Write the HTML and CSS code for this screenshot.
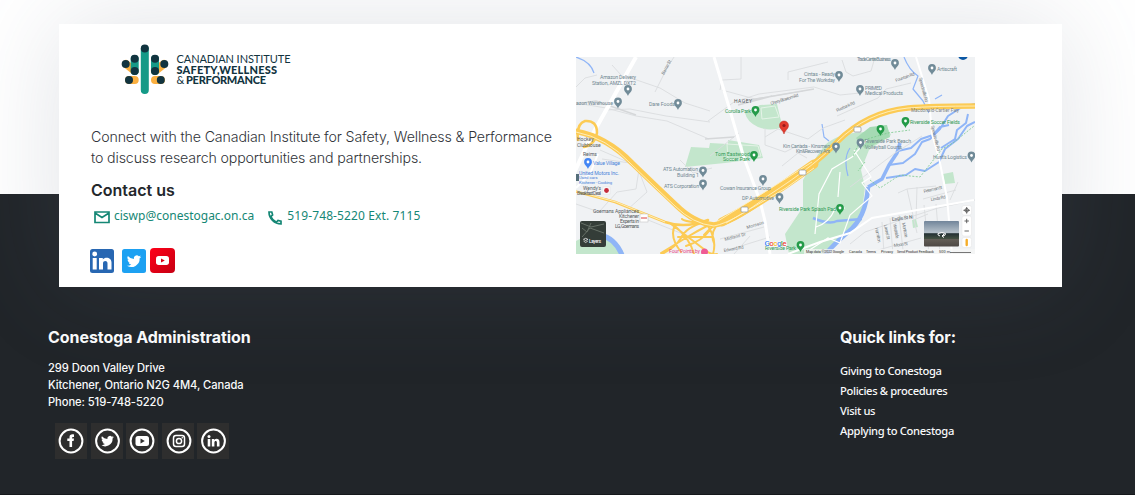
FILE: index.html
```html
<!DOCTYPE html>
<html lang="en">
<head>
<meta charset="utf-8">
<title>Canadian Institute for Safety, Wellness &amp; Performance</title>
<link rel="stylesheet" href="styles.css">
</head>
<body>
<div class="page">
  <main class="card">
    <section class="intro">
      <svg class="logo" viewBox="120 42 174 54" role="img" aria-label="Canadian Institute Safety, Wellness and Performance">
        <g stroke-width="8" stroke-linecap="round">
          <path stroke="#fbb040" d="M126 64l8.700 7M164 64l-9 7M129 80h5.700M161 80h-6"/>
          <path stroke="#159a87" d="M144.800 49v41M134.700 59v12M155 59v12"/>
        </g>
        <g fill="#12343f"><circle cx="144.800" cy="48.500" r="4"/><circle cx="134.700" cy="58.800" r="4"/><circle cx="155" cy="58.800" r="4"/><circle cx="125.700" cy="64" r="4"/><circle cx="164.300" cy="64" r="4"/><circle cx="134.700" cy="71" r="4"/><circle cx="155" cy="71" r="4"/><circle cx="129" cy="80" r="4"/><circle cx="160.800" cy="80" r="4"/></g>
        <g class="logo-text">
          <text x="176.500" y="62.700" textLength="114">CANADIAN INSTITUTE</text>
          <text class="heavy" x="176.500" y="73.500" textLength="100.500">SAFETY,WELLNESS</text>
          <text x="176.500" y="84.200">&amp;</text>
          <text class="heavy" x="186" y="84.200" textLength="80">PERFORMANCE</text>
        </g>
      </svg>
      <p class="lead">Connect with the Canadian Institute for Safety, Wellness &amp; Performance<br>to discuss research opportunities and partnerships.</p>
      <h2 class="contact-title">Contact us</h2>
      <div class="contacts">
        <svg class="mail-icon" viewBox="0 0 16 13"><path d="M1 1h14v10.500H1zM1 2l7 4.500L15 2"/></svg>
        <a class="email">ciswp@conestogac.on.ca</a>
        <svg class="phone-icon" viewBox="0 0 14 14"><path d="M1 1h2.800l.8 3-1.800 1.600a11 11 0 0 0 5.600 5.600L10 9.400l3 .8V13C6.500 13 1 7.500 1 1z"/></svg>
        <a class="phone">519-748-5220 Ext. 7115</a>
      </div>
      <div class="social">
        <svg class="tile linkedin" viewBox="0 0 24 24"><rect width="24" height="24" rx="2.500" fill="#2867b2"/><g fill="#fff"><circle cx="4.700" cy="5" r="2.400"/><path d="M2.700 9h4v11.500h-4zM9 9h3.800v1.600c2-3 8.700-2.700 8.700 3v6.900h-4v-6c0-3.200-4.500-3.200-4.500 0v6H9z"/></g></svg>
        <svg class="tile twitter" viewBox="0 0 24 24"><rect width="24" height="24" rx="2.500" fill="#1da1f2"/><use href="#bird" transform="translate(4.500 4.700) scale(.62)" fill="#fff"/></svg>
        <svg class="tile youtube" viewBox="0 0 25 25"><defs><linearGradient id="red" x2="1" y2="1"><stop stop-color="#ff0018"/><stop offset="1" stop-color="#c60013"/></linearGradient></defs><rect width="25" height="25" rx="4" fill="url(#red)"/><rect x="6" y="8" width="13" height="9" rx="2.700" fill="#fff"/><path fill="#d90016" d="M11 10.500v4l3.800-2z"/></svg>
      </div>
    </section>

    <svg class="map" viewBox="576 57 399 197">
      <defs>
        <path id="bird" d="M23.600 4.900c-.8.400-1.700.6-2.700.8a4.700 4.700 0 0 0 2-2.600 9 9 0 0 1-3 1.100 4.700 4.700 0 0 0-8 4.300A13.300 13.300 0 0 1 2.200 3.600a4.700 4.700 0 0 0 1.500 6.300c-.8 0-1.500-.2-2.100-.6a4.700 4.700 0 0 0 3.800 4.700c-.7.200-1.400.2-2.100.1a4.700 4.700 0 0 0 4.400 3.200A9.500 9.500 0 0 1 .7 19.300a13.300 13.300 0 0 0 20.500-11.800c.9-.7 1.700-1.500 2.400-2.600z"/>
        <g id="pin"><path d="M0 6C-1 3-3.900 2-3.900-1a3.900 3.900 0 0 1 7.800 0C3.900 2 1 3 0 6z"/><circle cy="-1" r="1.400" fill="#fff"/></g>
      </defs>
      <rect x="576" y="57" width="399" height="197" fill="#f0f2f4"/>
      <g fill="#c3e6cc">
        <path d="M745 113l15-8 17-1 3 13 3 10q-13 5-25 0-11-5-13-14z"/>
        <path d="M691 147l18 1 1-5 18 1v-4l31 5 4 13-38 5-40 4z"/>
        <path d="M869 128l17-3 5 10-22 15-8 20 4 17-4 34-29 26-7 7h-36l-4-20 18-27v-27l14-24 8-11q14-13 44-13z"/>
        <path d="M576 241q22-13 36 0 10 6 12 13h-48zM943 174l10-2 2 11-10 1zM912 220l4-1 2 8-5 1z"/>
      </g>
      <path fill="#a5dab3" d="M856 138l14-11 17-2 3 12-25 12z"/>
      <path fill="none" stroke="#e4f3e7" d="M761 108l14-2 4 11-17 2zM727 144l31 2 3 10-33 4zM742 145l2 13"/>
      <g fill="none" stroke="#8fb5f7" stroke-linejoin="round">
        <path stroke-width="5" d="M600 235q15 3 22 20"/>
        <path stroke-width="1.200" d="M576 57q15 5 18 16M904 57q5 13 14 19l-5 13 10 12 6 12M935 99l7-4M822 124l2 13 5 4M848 176q-5-18 2-28"/>
        <path stroke-width="4.500" d="M868 187q-2 31-20 45-15 13-23 23"/>
        <path stroke-width="3.600" d="M868 187l14-8 7-14 8-12 3-10"/>
        <path stroke-width="2" d="M889 165l14-2 12-9 7-12 8-3 10-10 8-13 14-9 13-3M975 122l-8 4-9 13-13 10-6 13-14 9-10-2-9 6-20 3M898 151l13-3 10-9 12-4 7-8 9-2M968 114l-2 9-9 7-2 9-14 9"/>
        <path stroke-width="2.500" d="M813 218q16 7 24 3l25-2"/>
      </g>
      <g fill="none" stroke="#dadddf" stroke-width=".9">
        <path d="M576 87l9-9 12-3M625 76l35 12 25 15 25 8M655 92l12-24 7-11M612 65l9 10M576 103l30 5 30 8 31 5 42 18M605 110l25-1 36 7 44 6M708 121l26-19 25-8 55-7 26 8 20-2M720 90l2-10 19-1V57M722 90l33 9 48-8M710 156l29-23M765 137l13-8 30 10 15-11 22-8M765 128v17l20 7 16-8M788 80v-8l40-10M842 60l4 12 7 4 18-5 4-14M837 116l20-9 21-9 8-9 25-6M576 204l23 8 18-20 19-3 3-20-9-6-28-4M600 150l37 16 10 26-20 18M643 218l40 16M680 160l13 13 19-5"/>
        <path d="M850 187l45-34 27-17M850 244l15-12 30-10 43-14 37-8M882 222l2 32M890 218l3 36M899 215l4 35M907 189l10 44M917 187l-1 32 12-5M898 193l9-4 29-3M923 199l33-9M950 200l8-18M924 205l5 49M936 204l4 50M871 252l50-14M720 239l44-12M728 250l42-13M734 254l16-18M782 166l16-13 9 5"/>
      </g>
      <g fill="none" stroke="#d5d7d9" stroke-width="1.500"><path d="M744 101l70-12M576 104l20-3 40 14M705 139l29-2M738 105l34-9"/></g>
      <g fill="none" stroke="#fff">
        <path stroke-width="4" d="M636 57l-45 80-17 36"/>
        <path stroke-width="3" d="M714 57l15 50 14 48 17 46 5 20 5 33"/>
        <path stroke-width="2" d="M916 57l13 42 3 35 7 24 8 40 5 56M788 254l32-12 30-9 22-15 102-18M576 188l14-14 8-20"/>
        <path stroke-width="1.200" d="M867 140l-15 17-20 12-13 25-4 40M854 150l17 27-9 6 10 13-22 19-10 28-12-5-20 13M816 227q13-4 19-18l10-1M840 172l-2 25"/>
      </g>
      <g fill="none" stroke="#fccb55" stroke-linecap="round">
        <path stroke-width="5.500" d="M574 131q32 5 58 32 27 26 44 42 18 18 38 20 20-3 55-30 48-31 68-53 30-30 71-34 25-2 70-2"/>
        <path stroke-width="2.500" d="M574 191l41 11 50 20q20 7 43-2M578 140q-2-16 7-19 12-1 12 12-2 12-13 14"/>
        <path stroke-width="2" d="M705 222q-19 5-24 16-5 9-19 16M705 223q-20-1-23-4M671 224l34 26q6 5 12 4M704 221q14 16 9 33M661 253l28-17q10-6 18-10M675 225q-6 12 6 27M710 230q-8 11-24 16M678 237h34M694 254q-4-15-18-27M704 235q9-10 17-13M726 216q-18 14-12 27"/>
        <path stroke-width="9" d="M722 222q26-13 62-37l30-21"/>
      </g>
      <g fill="none" stroke="#fff1c2" stroke-width=".9"><path d="M576 132q31 6 54 31 29 28 45 43 18 18 39 20 20-4 55-31 48-31 68-53 30-30 71-34 25-2 68-2M576 191l40 11 49 20M718 221l50-31 44-28M726 223l60-35 28-20"/></g>
      <g fill="none" stroke="#79c98c" stroke-width=".8" stroke-dasharray="2 1.500"><path d="M870 180l10 8 20-13 20 2 22-28 11-6 21-17M853 156l7-15 28-8 22-3M865 162l-7 9"/></g>
      <g fill="#fff" stroke="#8d9399" stroke-width=".7"><rect x="799" y="170" width="7" height="5" rx="1"/><rect x="741" y="207" width="7" height="5" rx="1"/><rect x="854" y="127" width="7" height="5" rx="1"/></g>
      <g fill="#718b98"><use href="#pin" x="628" y="90"/><use href="#pin" x="618" y="102.500"/><use href="#pin" x="678" y="104"/><use href="#pin" x="839" y="76"/><use href="#pin" x="895" y="64"/><use href="#pin" x="932" y="69"/><use href="#pin" x="860" y="90"/><use href="#pin" x="703" y="171.500"/><use href="#pin" x="703" y="184.500"/><use href="#pin" x="763" y="180"/><use href="#pin" x="779.500" y="198"/><use href="#pin" x="836" y="147.500"/><use href="#pin" x="860.500" y="143.500"/><use href="#pin" x="971.500" y="156.500"/></g>
      <g fill="#249b49"><use href="#pin" x="755.500" y="111"/><use href="#pin" x="880.500" y="130"/><use href="#pin" x="905.500" y="122"/><use href="#pin" x="754" y="156"/><use href="#pin" x="840" y="209"/><use href="#pin" x="800.500" y="246"/></g>
      <use href="#pin" x="588" y="163" fill="#4285f4"/>
      <path fill="#e33b2e" stroke="#b72a22" stroke-width=".5" d="M784 134c-1-4-4.500-5-4.500-8.500a4.500 4.500 0 0 1 9 0c0 3.500-3.500 4.500-4.500 8.500z"/><circle cx="784" cy="125.500" r="1.600" fill="#991b1b"/>
      <circle cx="704.500" cy="252" r="3.500" fill="#ef5b94"/><circle cx="963" cy="55" r="5" fill="#0b57a4"/>
      <g class="place">
        <text x="600" y="79" textLength="36">Amazon Delivery</text><text x="592" y="85" textLength="44">Station, AMZL DXT2</text><text x="576" y="104.500" textLength="37">azon Warehouse</text><text x="649" y="106" textLength="26">Dare Foods</text>
        <text x="804" y="76" textLength="31">Cintas - Ready</text><text x="799" y="81.500" textLength="36">For The Workday</text><text x="857" y="61" textLength="34">Trade Centre Business</text><text x="937" y="71" textLength="20">Artiscraft</text><text x="865" y="89.500" textLength="17">PRIMED</text><text x="865" y="94.800" textLength="38">Medical Products</text>
        <text x="663" y="171" textLength="35">ATS Automation</text><text x="677" y="176.500" textLength="22">Building 1</text><text x="664" y="187.500" textLength="35">ATS Corporation</text><text x="720" y="190" textLength="51">Cowan Insurance Group</text><text x="742" y="200" textLength="32">DP Automotive</text><text x="783" y="147.500" textLength="47">Kin Canada - Kinsmen</text><text x="796" y="153" textLength="34">Kin&amp;Recovery Ant</text><text x="865" y="143" textLength="46">Riverside Park Beach</text><text x="865" y="148.500" textLength="37">Volleyball Courts</text><text x="933" y="159" textLength="34">Hunt's Logistics</text>
      </g>
      <g class="place park"><text x="725" y="113" textLength="26">Corolla Park</text><text x="715" y="155.500" textLength="35">Tom Eastwood</text><text x="723" y="161" textLength="27">Soccer Park</text><text x="910" y="124" textLength="50">Riverside Soccer Fields</text><text x="779" y="211" textLength="57">Riverside Park Splash Pad</text><text x="765" y="250" textLength="31">Riverside Park</text></g>
      <g class="place dark"><text x="734" y="103" textLength="18">HAGEY</text><text x="577" y="141">Hockey</text><text x="577" y="146.500">Clubhouse</text><text x="583" y="155.500">Reims</text><text x="583" y="189.700" textLength="18">Wendy's</text><text x="577" y="195" textLength="24">Breakfast Deal</text><text x="593" y="213" textLength="46">Goemans Appliances</text><text x="619" y="218.200" textLength="20">Kitchener</text><text x="620" y="223" textLength="19">Experts in</text><text x="615" y="227.800" textLength="24">LG, Goemans</text><text x="892" y="221" transform="rotate(-7 892 221)" textLength="21">Eagle St N</text></g>
      <g class="place shop"><text x="593" y="164.500" textLength="27">Value Village</text><text x="579" y="175" textLength="40">United Motors Inc.</text><g class="tiny"><text x="579" y="179.300">Used cars</text><text x="579" y="183.500" textLength="33">Kitchener - Cooking</text></g></g>
      <text class="place hotel" x="669" y="253" textLength="31">Four Points by</text>
      <g class="place road"><text x="911" y="112" textLength="48">Macdonald-Cartier Fwy</text><text x="664" y="75" transform="rotate(-62 664 75)" textLength="16">Barrie St</text><text x="771" y="105" transform="rotate(-17 771 105)" textLength="29">Cherry Blossom Rd</text><text x="896" y="82" transform="rotate(-20 896 82)" textLength="20">Fountain Rd</text><text x="837" y="112" transform="rotate(-24 837 112)" textLength="20">Riverbank Rd</text><text x="919" y="78" transform="rotate(76 919 78)" textLength="25">Speedsville Rd</text><text x="931" y="126" transform="rotate(76 931 126)" textLength="26">Speedsville Rd</text><text x="725" y="241" transform="rotate(-15 725 241)">Midland Dr</text><text x="724" y="252" transform="rotate(-10 724 252)" textLength="20">Edward Rd</text><text x="747" y="229" transform="rotate(-17 747 229)" textLength="18">Morrison</text><text x="924" y="193" transform="rotate(-13 924 193)" textLength="19">Peterman St</text><text x="931" y="201" transform="rotate(-10 931 201)" textLength="15">Linda Rd</text><text x="894" y="247" transform="rotate(-8 894 247)" textLength="14">Moon St</text><text x="875" y="228" transform="rotate(78 875 228)" textLength="15">Hamilton</text><text x="884" y="225" transform="rotate(78 884 225)" textLength="15">Laurel St</text><text x="893" y="224" transform="rotate(78 893 224)" textLength="15">Westside</text><text x="902" y="223" transform="rotate(78 902 223)" textLength="15">Montrose</text></g>
      <rect x="603" y="187" width="7" height="7" fill="#fff" stroke="#ddd" stroke-width=".5"/><circle cx="606.500" cy="190.500" r="2.400" fill="#c52b3b"/><rect x="640" y="214" width="8" height="8" fill="#fff" stroke="#bbb" stroke-width=".5"/><path stroke="#dc4242" d="M641 218h6"/>
      <rect x="576" y="174" width="3" height="7" fill="#546e7a"/>
      <rect x="580" y="221" width="26" height="26" rx="2" fill="#343d38"/><path fill="none" stroke="#667067" stroke-width="1" d="M581 223l10 4 13-3M582 237l8-9 14 5M582 228l5 4 4-9"/><path fill="none" stroke="#fff" stroke-width=".7" d="M585.700 238.300l-2.200 1 2.200 1.300 2.200-1.300zM583.500 241l2.200 1.500 2.200-1.500"/><text class="layers" x="589" y="242.500" textLength="12">Layers</text>
      <defs><linearGradient id="sky" x2="0" y2="1"><stop stop-color="#71859a"/><stop offset=".45" stop-color="#b6c1ca"/><stop offset=".5" stop-color="#253235"/><stop offset=".7" stop-color="#445142"/><stop offset=".72" stop-color="#625d56"/><stop offset="1" stop-color="#4d4845"/></linearGradient></defs>
      <rect x="924" y="221" width="35" height="25.500" rx="1" fill="url(#sky)"/><path stroke="#fff" fill="none" d="M940 236q-3-1-2-2.500 4-2 7.500 0 .5 2-3 2.500m1.500-2l-2 2 2 1.500"/>
      <g fill="#fff" stroke="#ddd" stroke-width=".4"><rect x="962" y="205.500" width="9.500" height="9.500" rx="2"/><rect x="962" y="216" width="9.500" height="20" rx="2"/><rect x="962" y="237.500" width="9.500" height="10" rx="2"/></g>
      <g fill="none" stroke="#555" stroke-width=".9"><circle cx="966.700" cy="210.300" r="1.800"/><path d="M966.700 207v6.600m-3.300-3.300h6.600M964.500 221h4.400m-2.200-2.200v4.400M964.500 231h4.400"/></g><path stroke="#f5ad28" stroke-width="2.400" stroke-linecap="round" d="M966.700 240v5"/>
      <text class="google" x="764.500" y="245.500" textLength="22"><tspan fill="#4285f4">G</tspan><tspan fill="#ea4335">o</tspan><tspan fill="#fbbc05">o</tspan><tspan fill="#4285f4">g</tspan><tspan fill="#34a853">l</tspan><tspan fill="#ea4335">e</tspan></text>
      <rect x="804" y="249" width="171" height="5" fill="#f5f5f5" opacity=".75"/><g class="legal"><text x="806" y="253.200" textLength="38">Map data ©2022 Google</text><text x="849" y="253.200" textLength="13">Canada</text><text x="866" y="253.200" textLength="10">Terms</text><text x="881" y="253.200" textLength="12">Privacy</text><text x="897" y="253.200" textLength="37">Send Product Feedback</text><text x="939" y="253.200" textLength="11">500 m</text></g><path d="M950 252.500h21" stroke="#555" stroke-width=".8"/>
    </svg>
  </main>

  <footer class="footer">
    <section class="admin">
      <h3>Conestoga Administration</h3>
      <address>299 Doon Valley Drive<br>Kitchener, Ontario N2G 4M4, Canada<br>Phone: 519-748-5220</address>
      <div class="badges">
        <svg class="badge" viewBox="0 0 32 36"><circle cx="16" cy="18" r="11.400"/><path d="M14.500 24v-6h-2.200v-2.500h2.200v-1.300c0-2.500 1.700-3.300 4.500-2.800V14c-1.600-.1-1.900 0-1.900 1.500H19l-.4 2.500h-1.500v6z"/></svg>
        <svg class="badge" viewBox="0 0 32 36"><circle cx="16.500" cy="18" r="11.400"/><use href="#bird" transform="translate(9.700 11.300) scale(.56)"/></svg>
        <svg class="badge" viewBox="0 0 32 36"><circle cx="16" cy="18" r="11.400"/><rect x="9.500" y="13" width="13.500" height="10" rx="2.500"/><path class="hole" d="M14.500 15.500v5l4.300-2.500z"/></svg>
        <svg class="badge" viewBox="0 0 32 36"><circle cx="17" cy="18" r="11.400"/><g class="outline"><rect x="11.500" y="12.500" width="11" height="11" rx="2.500"/><circle cx="17" cy="18" r="2.600"/></g><circle class="dot" cx="20.300" cy="14.800" r=".8"/></svg>
        <svg class="badge" viewBox="0 0 32 36"><circle cx="16.500" cy="18" r="11.400"/><circle class="dot" cx="12" cy="13.500" r="1.500"/><path d="M10.700 16h2.600v7.500h-2.600zM14.800 16h2.500v1c1.600-2 5.200-1.500 5.200 2v4.500h-2.600v-4c0-2-2.500-2-2.500 0v4h-2.600z"/></svg>
      </div>
    </section>
    <nav class="quick">
      <h3>Quick links for:</h3>
      <a>Giving to Conestoga</a><a>Policies &amp; procedures</a><a>Visit us</a><a>Applying to Conestoga</a>
    </nav>
  </footer>
</div>
</body>
</html>
```
FILE: styles.css
```css
* { box-sizing: border-box; }
body { margin: 0; overflow: hidden; font-family: Inter, "Liberation Sans", sans-serif; }
.page { height: 495px; padding-top: 24px; overflow: hidden; background: linear-gradient(#fff 194px, #212529 194px); border-bottom: 1px solid #15181b; }
.card { display: flex; height: 263px; margin: 0 73px 0 59px; background: #fff; box-shadow: 0 0 100px rgba(98, 108, 130, .19); }
.intro { width: 517px; padding: 18px 0 0 32px; }
.logo { display: block; width: 174px; height: 54px; margin-left: 29px; }
.logo-text { font: 11px Lato, sans-serif; fill: #12343f; }
.logo-text .heavy { font-weight: 900; }
.lead { margin: 30px 0 0; font-size: 14.2px; font-weight: 300; line-height: 21px; letter-spacing: -.14px; color: #303338; white-space: nowrap; }
.contact-title { margin: 11px 0 0; font-size: 16px; font-weight: 600; line-height: 22px; color: #24282c; }
.contacts { display: flex; align-items: center; height: 20px; margin-top: 5px; padding-left: 3px; font: 12px/18px "Noto Sans", sans-serif; color: #158775; }
.contacts a { white-space: nowrap; }
.phone { letter-spacing: .12px; }
.mail-icon, .phone-icon { flex: none; fill: none; stroke: #158775; stroke-width: 1.700; }
.mail-icon { width: 16px; height: 13px; margin: 3px 4px 0 0; }
.phone-icon { width: 14px; height: 14px; margin: 3px 5px 0 14px; }
.social { display: flex; align-items: center; margin: 22px 0 0 -1px; }
.tile { display: block; width: 24px; height: 24px; }
.linkedin, .twitter { margin-top: 1px; }
.twitter { margin-right: 4px; margin-left: 8px; }
.youtube { width: 25px; height: 25px; }
.map { display: block; width: 399px; height: 197px; margin-top: 33px; }
.place { font: 5.200px Roboto, sans-serif; fill: #718892; }
.park { fill: #2f9955; }
.dark { font-size: 5px; fill: #555a60; }
.shop { fill: #4b83d9; }
.tiny { font-size: 4.200px; }
.hotel { fill: #e94b8a; }
.road { font-size: 4.500px; fill: #777d82; }
.layers { font: 500 4.500px Roboto, sans-serif; fill: #fff; }
.google { font: 500 8px Roboto, sans-serif; stroke: #fff; stroke-width: .8px; paint-order: stroke; }
.legal { font: 3.800px Roboto, sans-serif; fill: #333; }
.footer { display: flex; padding: 39px 0 0 48px; color: #f8f9fa; }
.footer h3 { margin: 0; font-size: 16px; font-weight: 700; line-height: 22px; letter-spacing: -.06px; white-space: nowrap; }
.admin { width: 792px; }
address { margin-top: 12px; font-size: 11.200px; font-style: normal; font-weight: 500; line-height: 17px; letter-spacing: -.08px; }
.badges { display: flex; margin: 12px 0 0 7px; }
.badge { width: 32px; height: 36px; margin-right: 3px; background: #2e2e2e; fill: #fff; }
.badge:first-child { margin-right: 4px; }
.badge:nth-child(3) { margin-right: 4px; }
.badge > circle:first-child { fill: none; stroke: #fff; stroke-width: 2; }
.badge .hole { fill: #2e2e2e; }
.badge .outline { fill: none; stroke: #fff; stroke-width: 1.500; }
.quick { display: flex; flex-direction: column; font: 500 11.200px/20px "Noto Sans", sans-serif; letter-spacing: -.35px; }
.quick h3 { margin-bottom: 13px; font-family: Inter, sans-serif; letter-spacing: -.1px; }
```
